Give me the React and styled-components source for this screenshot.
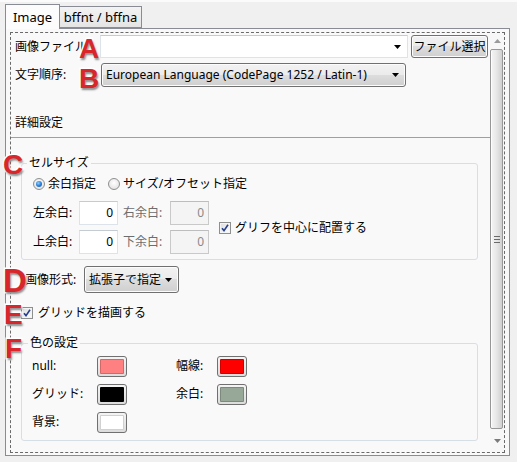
import React from "react";
import styled, { createGlobalStyle } from "styled-components";

const GlobalStyle = createGlobalStyle`
  html, body {
    margin: 0;
    padding: 0;
    background: #f0f0f0;
  }
  body {
    font-family: "Noto Sans", "Noto Sans CJK JP", sans-serif;
    font-size: 12px;
    color: #000;
  }
`;

const Window = styled.div`
  position: relative;
  width: 517px;
  height: 462px;
  box-sizing: border-box;
  border-top: 2px solid #fbfbfb;
  padding: 2px 0 0 5px;
  overflow: hidden;
  background: #f0f0f0;
`;

const TabStrip = styled.div`
  display: flex;
  align-items: flex-end;
  height: 24px;
`;

const Tab = styled.div`
  box-sizing: border-box;
  display: flex;
  align-items: center;
  justify-content: center;
  width: ${(p) => p.$width}px;
  height: ${(p) => (p.$active ? 25 : 22)}px;
  margin-bottom: ${(p) => (p.$active ? -1 : 0)}px;
  border: 1px solid #898c95;
  border-bottom: ${(p) => (p.$active ? "none" : "1px solid #898c95")};
  border-left: ${(p) => (p.$active ? "1px solid #898c95" : "none")};
  background: ${(p) =>
    p.$active ? "#fcfcfc" : "linear-gradient(#f3f3f3, #e4e4e4)"};
  font-size: 13px;
  padding-bottom: ${(p) => (p.$active ? 1 : 0)}px;
  position: relative;
  z-index: ${(p) => (p.$active ? 1 : 0)};
`;

const Panel = styled.div`
  box-sizing: border-box;
  width: 505px;
  height: 428px;
  border: 1px solid #898c95;
  background: #f9f9f9;
  padding: 3px 4px 2px 4px;
`;

const DashedBox = styled.div`
  box-sizing: border-box;
  height: 100%;
  border: 1px dashed #6a6a6a;
  display: flex;
`;

const Content = styled.div`
  flex: 1;
  overflow: hidden;
  line-height: 16px;
`;

const Row = styled.div`
  display: flex;
  align-items: center;
  height: ${(p) => p.$h || 16}px;
  margin-top: ${(p) => p.$mt || 0}px;
  margin-left: ${(p) => p.$ml || 0}px;
`;

const Label = styled.span`
  display: inline-block;
  width: ${(p) => p.$w}px;
  flex: none;
  white-space: nowrap;
  color: ${(p) => (p.$disabled ? "#6d6d6d" : "#000")};
`;

const EditCombo = styled.div`
  box-sizing: border-box;
  width: ${(p) => p.$w}px;
  height: 100%;
  background: #fff;
  border: 1px solid #dde3ea;
  border-top-color: #c3cbd3;
  display: flex;
  align-items: center;
  justify-content: flex-end;
  padding-right: 6px;
`;

const buttonFace = `
  box-sizing: border-box;
  border: 1px solid #707070;
  border-radius: 3px;
  background: linear-gradient(#f2f2f2 0%, #ebebeb 50%, #dddddd 50%, #cfcfcf 100%);
  box-shadow: inset 0 0 0 1px #fcfcfc;
`;

const Button = styled.div`
  ${buttonFace}
  width: ${(p) => p.$w}px;
  height: 100%;
  margin-left: ${(p) => p.$ml || 0}px;
  display: flex;
  align-items: center;
  justify-content: center;
  white-space: nowrap;
  flex: none;
`;

const Combo = styled.div`
  ${buttonFace}
  width: ${(p) => p.$w}px;
  height: 100%;
  display: flex;
  align-items: center;
  justify-content: space-between;
  padding: 0 6px 0 4px;
  white-space: nowrap;
  flex: none;
`;

const Separator = styled.div`
  height: 1px;
  background: #a0a0a0;
  margin-top: 6px;
  margin-left: -1px;
`;

const GroupBox = styled.fieldset`
  margin: ${(p) => p.$mt}px 12px 0 10px;
  border: 1px solid #d5dfe5;
  border-radius: 3px;
  padding: ${(p) => p.$pad};
  min-width: 0;
`;

const Legend = styled.legend`
  margin-left: ${(p) => p.$ml}px;
  padding: 0 2px;
  line-height: 16px;
  font-size: 12px;
`;

const RadioRow = styled.div`
  display: flex;
  align-items: center;
  height: 16px;
`;

const RadioItem = styled.label`
  display: flex;
  align-items: center;
  gap: 3px;
  margin-right: 12px;
`;

const RadioDot = styled.span`
  box-sizing: border-box;
  width: 12px;
  height: 12px;
  border-radius: 50%;
  border: 1px solid #8e8f8f;
  background: radial-gradient(circle at 50% 40%, #fff 0%, #e6e6e6 70%, #d2d2d2 100%);
  display: flex;
  align-items: center;
  justify-content: center;
  &::after {
    content: "";
    display: ${(p) => (p.$checked ? "block" : "none")};
    width: 6px;
    height: 6px;
    border-radius: 50%;
    background: radial-gradient(circle at 40% 35%, #8fd0ff 0%, #2d7fd6 50%, #1a4f9c 100%);
  }
`;

const MarginArea = styled.div`
  display: flex;
  align-items: center;
  margin-top: 9px;
`;

const MarginRows = styled.div`
  display: flex;
  flex-direction: column;
  gap: 5px;
`;

const MarginRow = styled.div`
  display: flex;
  align-items: center;
  height: 24px;
`;

const NumInput = styled.div`
  box-sizing: border-box;
  width: 39px;
  height: 24px;
  background: ${(p) => (p.$disabled ? "#f4f4f4" : "#fff")};
  border: 1px solid ${(p) => (p.$disabled ? "#c9c9c9" : "#dde3ea")};
  border-top-color: ${(p) => (p.$disabled ? "#bdbdbd" : "#c3cbd3")};
  color: ${(p) => (p.$disabled ? "#8a8a8a" : "#000")};
  text-align: right;
  padding-right: 4px;
  line-height: 22px;
  margin-right: ${(p) => p.$mr || 0}px;
`;

const CheckItem = styled.label`
  display: flex;
  align-items: center;
  gap: ${(p) => p.$gap || 4}px;
  margin-left: ${(p) => p.$ml || 0}px;
  white-space: nowrap;
`;

const CheckBox = styled.span`
  box-sizing: border-box;
  width: 12px;
  height: 12px;
  border: 1px solid #8e8f8f;
  background: linear-gradient(135deg, #dcdcdc, #ffffff);
  box-shadow: inset 0 0 0 1px #f4f4f4;
  display: flex;
  align-items: center;
  justify-content: center;
  flex: none;
`;

const ColorGrid = styled.div`
  display: grid;
  grid-template-columns: 65px 30px 49px 41px 30px;
  grid-auto-rows: 20px;
  row-gap: 8px;
  align-items: center;
`;

const Swatch = styled.div`
  box-sizing: border-box;
  width: 30px;
  height: 21px;
  border: 1px solid #707070;
  border-radius: 3px;
  background: linear-gradient(#f4f4f4, #dcdcdc);
  padding: 2px;
  &::after {
    content: "";
    display: block;
    box-sizing: border-box;
    height: 100%;
    background: ${(p) => p.$color};
    border: 1px solid rgba(0, 0, 0, 0.18);
    border-radius: 1px;
  }
`;

const Scrollbar = styled.div`
  width: 14px;
  flex: none;
  display: flex;
  flex-direction: column;
  background: #f7f7f7;
`;

const ScrollArrow = styled.div`
  height: ${(p) => p.$h}px;
  display: flex;
  align-items: center;
  justify-content: center;
  flex: ${(p) => (p.$grow ? 1 : "none")};
`;

const Thumb = styled.div`
  box-sizing: border-box;
  height: 380px;
  margin-right: 1px;
  border: 1px solid #979797;
  border-radius: 2px;
  background: linear-gradient(to right, #f4f4f4 0%, #e9e9e9 45%, #d0d0d0 100%);
  box-shadow: inset 1px 0 0 #fdfdfd;
  display: flex;
  align-items: center;
  justify-content: center;
`;

const Grip = styled.div`
  width: 6px;
  height: 7px;
  background: repeating-linear-gradient(#6a6a6a 0 1px, transparent 1px 3px);
`;

const Marker = styled.span`
  position: absolute;
  left: ${(p) => p.$x}px;
  top: ${(p) => p.$y}px;
  font-family: "Liberation Sans", Arial, sans-serif;
  font-weight: 700;
  font-size: ${(p) => p.$size || 28}px;
  line-height: 1;
  color: #d9262a;
  -webkit-text-stroke: 3px #fff;
  paint-order: stroke fill;
  text-shadow: 1px 2px 2px rgba(0, 0, 0, 0.45);
  z-index: 5;
`;

function Arrow({ color = "#000", up = false }) {
  return (
    <svg width="7" height="4" viewBox="0 0 7 4" style={{ flex: "none" }}>
      <path d={up ? "M0 4 L3.5 0 L7 4 Z" : "M0 0 L7 0 L3.5 4 Z"} fill={color} />
    </svg>
  );
}

function Check() {
  return (
    <svg width="8" height="8" viewBox="0 0 8 8">
      <path
        d="M1 4.2 L3 6.6 L7 0.8"
        fill="none"
        stroke="#263e8c"
        strokeWidth="1.6"
      />
    </svg>
  );
}

const colors = [
  ["null:", "#ff8080", "幅線:", "#ff0000"],
  ["グリッド:", "#000000", "余白:", "#98a898"],
  ["背景:", "#ffffff"],
];

export default function App() {
  return (
    <>
      <GlobalStyle />
      <Window>
        <TabStrip>
          <Tab $active $width={55}>Image</Tab>
          <Tab $width={82}>bffnt / bffna</Tab>
        </TabStrip>
        <Panel>
          <DashedBox>
            <Content>
              <Row $h={23} $mt={2} $ml={4}>
                <Label $w={85}>画像ファイル</Label>
                <EditCombo $w={308}>
                  <Arrow />
                </EditCombo>
                <Button $w={77} $ml={3}>ファイル選択</Button>
              </Row>
              <Row $h={24} $mt={5} $ml={4}>
                <Label $w={86}>文字順序:</Label>
                <Combo $w={305}>
                  <span>European Language (CodePage 1252 / Latin-1)</span>
                  <Arrow />
                </Combo>
              </Row>
              <Row $mt={28} $ml={4}>
                詳細設定
              </Row>
              <Separator />

              <GroupBox $mt={17} $pad="5px 10px 5px 11px">
                <Legend $ml={-6}>セルサイズ</Legend>
                <RadioRow>
                  <RadioItem>
                    <RadioDot $checked />
                    余白指定
                  </RadioItem>
                  <RadioItem>
                    <RadioDot />
                    サイズ/オフセット指定
                  </RadioItem>
                </RadioRow>
                <MarginArea>
                  <MarginRows>
                    <MarginRow>
                      <Label $w={46}>左余白:</Label>
                      <NumInput $mr={5}>0</NumInput>
                      <Label $w={47} $disabled>右余白:</Label>
                      <NumInput $disabled>0</NumInput>
                    </MarginRow>
                    <MarginRow>
                      <Label $w={46}>上余白:</Label>
                      <NumInput $mr={5}>0</NumInput>
                      <Label $w={47} $disabled>下余白:</Label>
                      <NumInput $disabled>0</NumInput>
                    </MarginRow>
                  </MarginRows>
                  <CheckItem $ml={10}>
                    <CheckBox>
                      <Check />
                    </CheckBox>
                    グリフを中心に配置する
                  </CheckItem>
                </MarginArea>
              </GroupBox>

              <Row $h={27} $mt={6} $ml={14}>
                <Label $w={59}>画像形式:</Label>
                <Combo $w={95}>
                  <span>拡張子で指定</span>
                  <Arrow />
                </Combo>
              </Row>

              <Row $mt={12} $ml={10}>
                <CheckItem $gap={5}>
                  <CheckBox>
                    <Check />
                  </CheckBox>
                  グリッドを描画する
                </CheckItem>
              </Row>

              <GroupBox $mt={14} $pad="5px 10px 8px 10px">
                <Legend $ml={-4}>色の設定</Legend>
                <ColorGrid>
                  {colors.map((r) => (
                    <React.Fragment key={r[0]}>
                      <span>{r[0]}</span>
                      <Swatch $color={r[1]} />
                      <span />
                      {r[2] ? <span>{r[2]}</span> : <span />}
                      {r[3] ? <Swatch $color={r[3]} /> : <span />}
                    </React.Fragment>
                  ))}
                </ColorGrid>
              </GroupBox>
            </Content>
            <Scrollbar>
              <ScrollArrow $h={16}>
                <Arrow up color="#9a9a9a" />
              </ScrollArrow>
              <Thumb>
                <Grip />
              </Thumb>
              <ScrollArrow $grow>
                <Arrow color="#7a7a7a" />
              </ScrollArrow>
            </Scrollbar>
          </DashedBox>
        </Panel>

        <Marker $x={79} $y={33}>A</Marker>
        <Marker $x={79} $y={63}>B</Marker>
        <Marker $x={3} $y={149}>C</Marker>
        <Marker $x={3} $y={262} $size={33}>D</Marker>
        <Marker $x={4} $y={299}>E</Marker>
        <Marker $x={5} $y={333}>F</Marker>
      </Window>
    </>
  );
}
